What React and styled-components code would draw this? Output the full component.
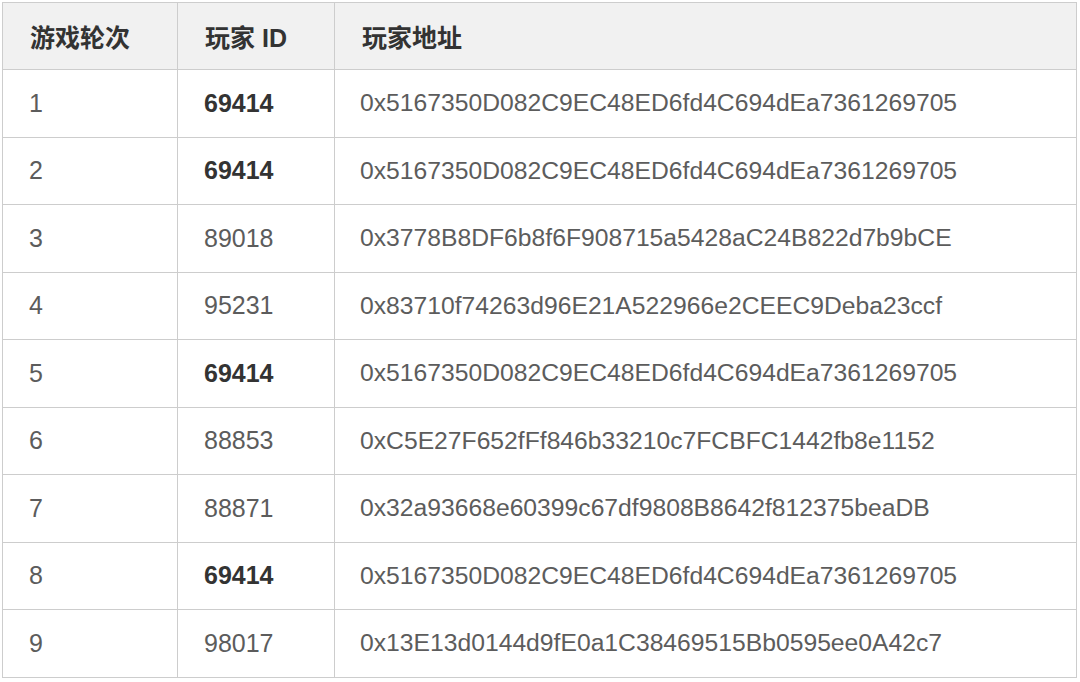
import React from 'react';
import styled, { createGlobalStyle } from 'styled-components';

const rows = [
  { round: '1', id: '69414', addr: '0x5167350D082C9EC48ED6fd4C694dEa7361269705', hit: true },
  { round: '2', id: '69414', addr: '0x5167350D082C9EC48ED6fd4C694dEa7361269705', hit: true },
  { round: '3', id: '89018', addr: '0x3778B8DF6b8f6F908715a5428aC24B822d7b9bCE' },
  { round: '4', id: '95231', addr: '0x83710f74263d96E21A522966e2CEEC9Deba23ccf' },
  { round: '5', id: '69414', addr: '0x5167350D082C9EC48ED6fd4C694dEa7361269705', hit: true },
  { round: '6', id: '88853', addr: '0xC5E27F652fFf846b33210c7FCBFC1442fb8e1152' },
  { round: '7', id: '88871', addr: '0x32a93668e60399c67df9808B8642f812375beaDB' },
  { round: '8', id: '69414', addr: '0x5167350D082C9EC48ED6fd4C694dEa7361269705', hit: true },
  { round: '9', id: '98017', addr: '0x13E13d0144d9fE0a1C38469515Bb0595ee0A42c7' },
];

export default function App() {
  return (
    <Page>
      <GlobalStyle />
      <Table>
        <colgroup>
          <col style={{ width: 175 }} />
          <col style={{ width: 157 }} />
          <col />
        </colgroup>
        <thead>
          <HeadRow>
            <Th>游戏轮次</Th>
            <Th>玩家 ID</Th>
            <Th>玩家地址</Th>
          </HeadRow>
        </thead>
        <tbody>
          {rows.map((r) => (
            <Row key={r.round}>
              <Td>{r.round}</Td>
              <Td $bold={r.hit}>{r.id}</Td>
              <Td $addr>{r.addr}</Td>
            </Row>
          ))}
        </tbody>
      </Table>
    </Page>
  );
}

const GlobalStyle = createGlobalStyle`
  html, body {
    margin: 0;
    padding: 0;
    background: #ffffff;
  }
`;

const Page = styled.div`
  padding: 2px 4px 4px 2px;
  font-family: 'Liberation Sans', 'Noto Sans CJK SC', sans-serif;
`;

const Table = styled.table`
  width: 1075px;
  border-collapse: collapse;
  table-layout: fixed;
  border: 1px solid #c8c8c8;
`;

const HeadRow = styled.tr`
  height: 67px;
  background: #f1f1f1;
`;

const Row = styled.tr`
  height: 67.5px;
  background: #ffffff;
`;

const Th = styled.th`
  padding: 0 0 0 27px;
  text-align: left;
  font-size: 25px;
  font-weight: 700;
  color: #333333;
  border: 1px solid #cdcdcd;
`;

const Td = styled.td`
  padding: 0 0 0 ${(p) => (p.$addr ? 25 : 26)}px;
  font-size: ${(p) => (p.$addr ? 24.7 : 25)}px;
  font-weight: ${(p) => (p.$bold ? 700 : 400)};
  color: ${(p) => (p.$bold ? '#333333' : '#5c5c5c')};
  border: 1px solid #cdcdcd;
  white-space: nowrap;
`;
